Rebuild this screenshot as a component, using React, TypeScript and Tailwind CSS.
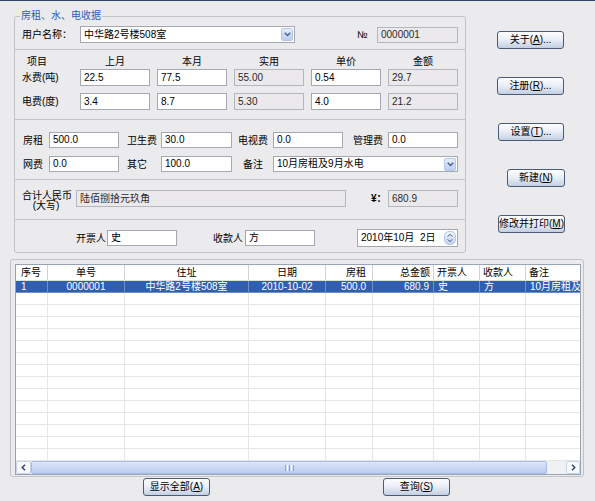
import React from "react";

const FONT = "font-['Liberation_Sans','Noto_Sans_CJK_SC',sans-serif]";

function Btn({ className, children }: { className: string; children: React.ReactNode }) {
  return (
    <div
      className={`${className} h-[18px] flex items-center justify-center rounded-[3px] border border-[#4a5b78] bg-linear-to-b from-[#fdfdff] via-[#e8edf6] to-[#c3cfe2] text-[10px] leading-none text-black whitespace-nowrap`}
    >
      {children}
    </div>
  );
}

function Field({ className, ro, children }: { className: string; ro?: boolean; children?: React.ReactNode }) {
  return (
    <div
      className={`${className} flex items-center shrink-0 border px-[3px] text-[10px] leading-none whitespace-nowrap overflow-hidden ${
        ro ? "bg-[#ebe9ec] border-[#b3b6bd] text-[#2a2a2a]" : "bg-white border-[#a3a8b1] text-black"
      }`}
    >
      {children}
    </div>
  );
}

function DropBtn() {
  return (
    <div className="ml-auto w-[12px] h-[13px] shrink-0 rounded-[2px] border border-[#b5c6e6] bg-linear-to-b from-[#e6edfc] to-[#bccdf1] flex items-center justify-center">
      <svg width="7" height="5" viewBox="0 0 7 5">
        <path d="M0.7 0.8 L3.5 3.6 L6.3 0.8" fill="none" stroke="#4a5f86" strokeWidth="1.4" />
      </svg>
    </div>
  );
}

function Combo({ className, children }: { className: string; children: React.ReactNode }) {
  return (
    <div className={`${className} flex items-center shrink-0 border border-[#a3a8b1] bg-white pl-[3px] pr-[1px] text-[10px] leading-none whitespace-nowrap`}>
      <span>{children}</span>
      <DropBtn />
    </div>
  );
}

const COLS = [
  { t: "序号", v: "1", w: "w-[32px]", h: "justify-start pl-[5px]", c: "justify-start pl-[5px]" },
  { t: "单号", v: "0000001", w: "w-[77px]", h: "justify-center", c: "justify-center" },
  { t: "住址", v: "中华路2号楼508室", w: "w-[124px]", h: "justify-center", c: "justify-center" },
  { t: "日期", v: "2010-10-02", w: "w-[77px]", h: "justify-center", c: "justify-center" },
  { t: "房租", v: "500.0", w: "w-[47px]", h: "justify-end pr-[6px]", c: "justify-end pr-[6px]" },
  { t: "总金额", v: "680.9", w: "w-[61px]", h: "justify-end pr-[3px]", c: "justify-end pr-[4px]" },
  { t: "开票人", v: "史", w: "w-[46px]", h: "justify-start pl-[3px]", c: "justify-start pl-[4px]" },
  { t: "收款人", v: "方", w: "w-[46px]", h: "justify-start pl-[3px]", c: "justify-start pl-[4px]" },
  { t: "备注", v: "10月房租及9月水电", w: "w-[90px]", h: "justify-start pl-[3px]", c: "justify-start pl-[4px]" },
];

export default function App() {
  return (
    <div className={`${FONT} w-[595px] h-[501px] overflow-hidden bg-[#ebeaec] border-t border-[#2f4468] text-black`}>
      <div className="flex">
        {/* main group box */}
        <div className="relative ml-[14px] mt-[15px] w-[452px] h-[237px] shrink-0 border border-[#c3c2c8] rounded-[3px] flex flex-col">
          <div className="absolute -top-[7px] left-[5px] px-[1px] bg-[#ebeaec] text-[10px] leading-[12px] text-[#2d5bb6]">
            房租、水、电收据
          </div>

          {/* user row */}
          <div className="h-[33px] shrink-0 border-b border-[#c3c2c8] flex items-center pt-[3px] pl-[7px] text-[10px]">
            <div className="w-[58px] shrink-0 whitespace-nowrap">用户名称：</div>
            <Combo className="w-[215px] h-[17px]">中华路2号楼508室</Combo>
            <div className="ml-[62px] w-[20px] shrink-0">№</div>
            <Field ro className="w-[81px] h-[16px]">0000001</Field>
          </div>

          {/* water / electric */}
          <div className="h-[70px] shrink-0 border-b border-[#c3c2c8] flex flex-col pt-[5px] text-[10px]">
            <div className="h-[13px] flex items-center gap-[7px] leading-none">
              <div className="w-[58px] pl-[12px] shrink-0">项目</div>
              <div className="w-[70px] text-center">上月</div>
              <div className="w-[70px] text-center">本月</div>
              <div className="w-[70px] text-center">实用</div>
              <div className="w-[70px] text-center">单价</div>
              <div className="w-[70px] text-center">金额</div>
            </div>
            <div className="mt-[1px] h-[17px] flex items-center gap-[7px] pl-[7px]">
              <div className="w-[51px] shrink-0 whitespace-nowrap">水费(吨)</div>
              <Field className="w-[70px] h-[17px]">22.5</Field>
              <Field className="w-[70px] h-[17px]">77.5</Field>
              <Field ro className="w-[70px] h-[17px]">55.00</Field>
              <Field className="w-[70px] h-[17px]">0.54</Field>
              <Field ro className="w-[70px] h-[17px]">29.7</Field>
            </div>
            <div className="mt-[7px] h-[17px] flex items-center gap-[7px] pl-[7px]">
              <div className="w-[51px] shrink-0 whitespace-nowrap">电费(度)</div>
              <Field className="w-[70px] h-[17px]">3.4</Field>
              <Field className="w-[70px] h-[17px]">8.7</Field>
              <Field ro className="w-[70px] h-[17px]">5.30</Field>
              <Field className="w-[70px] h-[17px]">4.0</Field>
              <Field ro className="w-[70px] h-[17px]">21.2</Field>
            </div>
          </div>

          {/* other fees */}
          <div className="h-[60px] shrink-0 border-b border-[#c3c2c8] flex flex-col pt-[12px] text-[10px]">
            <div className="h-[16px] flex items-center pl-[8px]">
              <div className="w-[26px] shrink-0">房租</div>
              <Field className="w-[70px] h-[16px]">500.0</Field>
              <div className="ml-[8px] w-[34px] shrink-0">卫生费</div>
              <Field className="w-[71px] h-[16px]">30.0</Field>
              <div className="ml-[6px] w-[35px] shrink-0">电视费</div>
              <Field className="w-[70px] h-[16px]">0.0</Field>
              <div className="ml-[10px] w-[35px] shrink-0">管理费</div>
              <Field className="w-[70px] h-[16px]">0.0</Field>
            </div>
            <div className="mt-[8px] h-[16px] flex items-center pl-[8px]">
              <div className="w-[26px] shrink-0">网费</div>
              <Field className="w-[70px] h-[16px]">0.0</Field>
              <div className="ml-[8px] w-[34px] shrink-0">其它</div>
              <Field className="w-[71px] h-[16px]">100.0</Field>
              <div className="ml-[11px] w-[30px] shrink-0">备注</div>
              <Combo className="w-[185px] h-[16px]">10月房租及9月水电</Combo>
            </div>
          </div>

          {/* total */}
          <div className="h-[40px] shrink-0 border-b border-[#c3c2c8] flex items-start pt-[10px] pl-[7px] text-[10px]">
            <div className="w-[54px] shrink-0">
              <div className="w-[48px] text-center leading-[10px] mt-[1px] whitespace-nowrap">
                合计人民币
                <br />
                (大写)
              </div>
            </div>
            <Field ro className="w-[270px] h-[17px]">陆佰捌拾元玖角</Field>
            <div className="ml-[25px] w-[17px] h-[17px] shrink-0 flex items-center font-bold">¥：</div>
            <Field ro className="w-[70px] h-[17px]">680.9</Field>
          </div>

          {/* people + date */}
          <div className="flex-1 flex items-center pt-[4px] pl-[61px] text-[10px]">
            <div className="w-[31px] shrink-0">开票人</div>
            <Field className="w-[70px] h-[16px]">史</Field>
            <div className="ml-[36px] w-[32px] shrink-0">收款人</div>
            <Field className="w-[70px] h-[16px]">方</Field>
            <div className="ml-[42px] w-[101px] h-[18px] shrink-0 flex items-center border border-[#a3a8b1] bg-white pl-[3px] pr-[1px] leading-none whitespace-nowrap">
              <span>2010年10月&nbsp;&nbsp;2日</span>
              <div className="ml-auto w-[12px] h-[14px] rounded-[5px] border border-[#b5c6e6] bg-linear-to-b from-[#eef3fd] to-[#c4d3f1] flex flex-col items-center justify-center gap-[2px]">
                <svg width="6" height="3" viewBox="0 0 6 3">
                  <path d="M0.5 2.6 L3 0.4 L5.5 2.6" fill="none" stroke="#4a5f86" strokeWidth="1" />
                </svg>
                <svg width="6" height="3" viewBox="0 0 6 3">
                  <path d="M0.5 0.4 L3 2.6 L5.5 0.4" fill="none" stroke="#4a5f86" strokeWidth="1" />
                </svg>
              </div>
            </div>
          </div>
        </div>

        {/* right buttons */}
        <div className="ml-[31px] mt-[30px] flex flex-col gap-[28px]">
          <Btn className="w-[67px]">
            关于(<span className="underline">A</span>)...
          </Btn>
          <Btn className="w-[67px]">
            注册(<span className="underline">R</span>)...
          </Btn>
          <Btn className="w-[66px] ml-[1px]">
            设置(<span className="underline">T</span>)...
          </Btn>
          <Btn className="w-[58px] ml-[10px]">
            新建(<span className="underline">N</span>)
          </Btn>
          <Btn className="w-[67px] ml-[1px]">
            修改并打印(<span className="underline">M</span>)
          </Btn>
        </div>
      </div>

      {/* list frame */}
      <div className="ml-[10px] mt-[6px] w-[574px] border border-[#c3c2c8] rounded-[3px] pt-[4px] pl-[4px] pb-[1px]">
        <div className="w-[566px] h-[211px] border border-[#98a3b5] bg-white flex flex-col overflow-hidden text-[10px] leading-none">
          <div className="h-[16px] shrink-0 flex border-b border-[#dedede]">
            {COLS.map((c) => (
              <div key={c.t} className={`${c.w} ${c.h} shrink-0 flex items-center border-r border-[#d2d2d2] whitespace-nowrap`}>
                {c.t}
              </div>
            ))}
          </div>
          <div className="h-[180px] shrink-0 overflow-hidden">
            {Array.from({ length: 15 }).map((_, i) => (
              <div key={i} className={`h-[12px] flex ${i === 0 ? "bg-[#2f5fae] text-white" : ""}`}>
                {COLS.map((c) => (
                  <div
                    key={c.t}
                    className={`${c.w} ${c.c} shrink-0 flex items-center border-r border-b whitespace-nowrap overflow-hidden ${
                      i === 0 ? "border-[#6f8fc8]" : "border-[#e6e6e6]"
                    }`}
                  >
                    {i === 0 ? c.v : ""}
                  </div>
                ))}
              </div>
            ))}
          </div>
          {/* horizontal scrollbar */}
          <div className="h-[13px] shrink-0 flex bg-[#f1f1f5]">
            <div className="w-[15px] h-[13px] shrink-0 flex items-center justify-center border border-[#c9d3e6] bg-[#f7f9fd] rounded-[2px]">
              <svg width="5" height="7" viewBox="0 0 5 7">
                <path d="M4 0.7 L1.2 3.5 L4 6.3" fill="none" stroke="#2c3f66" strokeWidth="1.4" />
              </svg>
            </div>
            <div className="w-[516px] h-[13px] shrink-0 rounded-[2px] border border-[#a9bde3] bg-linear-to-b from-[#dce6f9] to-[#b9cbef] flex items-center justify-center gap-[1px]">
              <div className="w-[1px] h-[6px] bg-[#8ea6d6]" />
              <div className="w-[1px] h-[6px] bg-[#fff]" />
              <div className="w-[1px] h-[6px] bg-[#8ea6d6]" />
              <div className="w-[1px] h-[6px] bg-[#fff]" />
              <div className="w-[1px] h-[6px] bg-[#8ea6d6]" />
            </div>
            <div className="flex-1" />
            <div className="w-[14px] h-[13px] shrink-0 flex items-center justify-center border border-[#c9d3e6] bg-[#f7f9fd] rounded-[2px]">
              <svg width="5" height="7" viewBox="0 0 5 7">
                <path d="M1 0.7 L3.8 3.5 L1 6.3" fill="none" stroke="#2c3f66" strokeWidth="1.4" />
              </svg>
            </div>
          </div>
        </div>
      </div>

      {/* bottom buttons */}
      <div className="mt-[1px] flex">
        <Btn className="ml-[143px] w-[67px]">
          显示全部(<span className="underline">A</span>)
        </Btn>
        <Btn className="ml-[173px] w-[67px]">
          查询(<span className="underline">S</span>)
        </Btn>
      </div>
    </div>
  );
}
